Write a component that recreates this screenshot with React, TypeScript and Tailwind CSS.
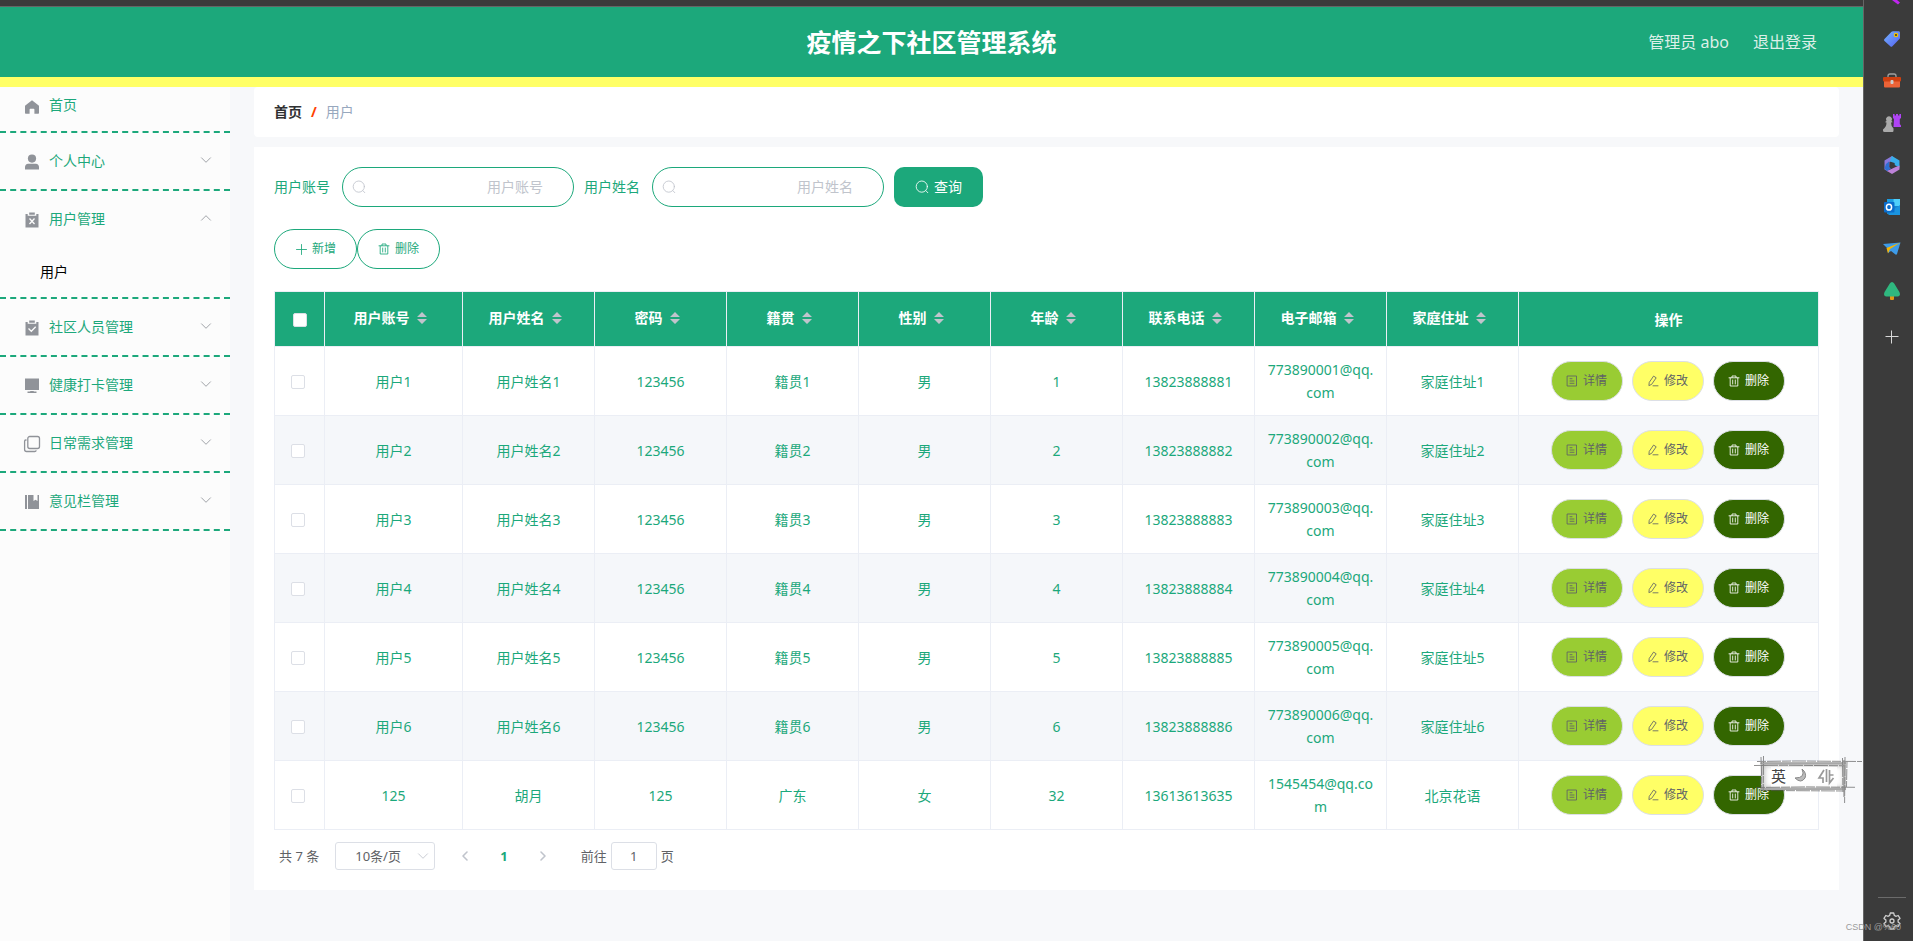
import React from "react";

type IconProps = { className?: string };

const line = {
  fill: "none",
  stroke: "currentColor",
  strokeWidth: 0.85,
  strokeLinecap: "round" as const,
  strokeLinejoin: "round" as const,
};

function SearchIcon({ className }: IconProps) {
  return (
    <svg viewBox="0 0 14 14" className={className} {...line} aria-hidden="true">
      <circle cx="6.8" cy="6.6" r="5.6" />
      <path d="M11 10.8l1.8 1.9" />
    </svg>
  );
}

function TrashIcon({ className }: IconProps) {
  return (
    <svg viewBox="0 0 12 12" className={className} {...line} aria-hidden="true">
      <path d="M1 2.8h10M4 2.6V1h4v1.6M2.2 3v8h7.6V3M4.7 5v4M7.3 5v4" />
    </svg>
  );
}

function PlusIcon({ className }: IconProps) {
  return (
    <svg viewBox="0 0 12 12" className={className} {...line} aria-hidden="true">
      <path d="M6.5 1.5v10M1.5 6.5h10" />
    </svg>
  );
}

function DocIcon({ className }: IconProps) {
  return (
    <svg viewBox="0 0 12 12" className={className} {...line} aria-hidden="true">
      <path d="M1.5 1h9v10h-9zM4 3.7h2M4 6h4M4 8.3h4" />
    </svg>
  );
}

function EditIcon({ className }: IconProps) {
  return (
    <svg viewBox="0 0 12 12" className={className} {...line} aria-hidden="true">
      <path d="M6.9 1.3l2.3 1.5-4.6 6.6-2.7 1.2.3-2.8zM6 10.8h5" />
    </svg>
  );
}

function Chevron({ className }: IconProps) {
  return (
    <svg viewBox="0 0 12 12" className={className} {...line} aria-hidden="true">
      <path d="M1.5 3.8L6 8.3l4.5-4.5" />
    </svg>
  );
}

function PageArrow({ className }: IconProps) {
  return (
    <svg viewBox="0 0 12 12" className={className} {...line} strokeWidth={1.6} aria-hidden="true">
      <path d="M8 2L4 6l4 4" />
    </svg>
  );
}

function HomeIcon() {
  return (
    <svg viewBox="0 0 18 18" className="size-[18px]" fill="currentColor" aria-hidden="true">
      <path d="M9 2.3L2.3 7.6c-.2.2-.3.4-.3.6V15c0 .4.3.7.7.7h3.9v-4.2c0-.4.3-.7.7-.7h3.400c.4 0 .7.3.7.7v4.2h3.900c.4 0 .7-.3.7-.7V8.200c0-.2-.1-.4-.3-.6z" />
    </svg>
  );
}

function UserIcon() {
  return (
    <svg viewBox="0 0 18 18" className="size-[18px]" fill="currentColor" aria-hidden="true">
      <circle cx="9" cy="5.6" r="4.1" />
      <path d="M2 16.500v-2.400c0-1.900 1.300-3.300 3.200-3.300h7.600c1.900 0 3.200 1.400 3.200 3.300v2.400z" />
    </svg>
  );
}

function Clipboard({ mark }: { mark: string }) {
  return (
    <svg viewBox="0 0 18 18" className="size-[18px]" aria-hidden="true">
      <path fill="currentColor" d="M2.500 3h2.200v1.800h8.600V3h2.200v13.500h-13zM6.200 1.500h5.600v2.200H6.200z" />
      <path d={mark} fill="none" stroke="#fcfcfc" strokeWidth="1.3" />
    </svg>
  );
}

function MonitorIcon() {
  return (
    <svg viewBox="0 0 18 18" className="size-[18px]" fill="currentColor" aria-hidden="true">
      <path d="M2 1.500h14v11.500H2zM7.500 14h3l.5.600h2.500V16h-9v-1.400H7z" />
    </svg>
  );
}

function CopyIcon() {
  return (
    <svg viewBox="0 0 18 18" className="size-[18px]" fill="none" stroke="currentColor" strokeWidth="1.3" aria-hidden="true">
      <rect x="4.8" y="1.5" width="11.7" height="12" rx="2" />
      <path d="M3.500 5H2.800C2 5 1.600 5.500 1.600 6.200v8.300c0 1.300.8 2 2 2h8c1 0 1.500-.3 1.500-1.300" />
    </svg>
  );
}

function BookIcon() {
  return (
    <svg viewBox="0 0 18 18" className="size-[18px]" fill="currentColor" aria-hidden="true">
      <path d="M2 2h2v14H2zM5 2h5.500v6l2-1.300 2 1.300V2H16v14H5z" />
    </svg>
  );
}

type MenuItem = { label: string; icon: React.ReactNode; child?: string };

const menu: MenuItem[] = [
  { label: "个人中心", icon: <UserIcon /> },
  { label: "用户管理", icon: <Clipboard mark="M6.500 7.500l5 5.500M11.500 7.500l-5 5.500" />, child: "用户" },
  { label: "社区人员管理", icon: <Clipboard mark="M5.500 9.500l2.800 2.800 4.400-4.600" /> },
  { label: "健康打卡管理", icon: <MonitorIcon /> },
  { label: "日常需求管理", icon: <CopyIcon /> },
  { label: "意见栏管理", icon: <BookIcon /> },
];

const columns = ["用户账号", "用户姓名", "密码", "籍贯", "性别", "年龄", "联系电话", "电子邮箱", "家庭住址"];

const rows: string[][] = [
  ...[1, 2, 3, 4, 5, 6].map((n) => [
    `用户${n}`,
    `用户姓名${n}`,
    "123456",
    `籍贯${n}`,
    "男",
    `${n}`,
    `1382388888${n}`,
    `77389000${n}@qq.com`,
    `家庭住址${n}`,
  ]),
  ["125", "胡月", "125", "广东", "女", "32", "13613613635", "1545454@qq.com", "北京花语"],
];

function Sidebar() {
  return (
    <nav className="w-[230px] shrink-0 bg-[#fcfcfc] text-sm leading-5 text-[#1ca87b]">
      <a href="#home" className="flex h-[46px] items-center border-b-2 border-dashed border-[#1ca87b] pb-2 pl-[23px]">
        <span className="mr-2 pt-[3px] text-[#909399]"><HomeIcon /></span>
        首页
      </a>
      {menu.map((m) => (
        <div key={m.label} className="border-b-2 border-dashed border-[#1ca87b]">
          <button type="button" aria-expanded={!!m.child} className="flex h-14 w-full items-center pr-[18px] pl-[23px] text-left">
            <span className="mr-2 pt-[2px] text-[#909399]">{m.icon}</span>
            <span className="flex-1">{m.label}</span>
            <Chevron className={m.child ? "mb-[2px] size-3 rotate-180 text-[#909399]" : "mb-[2px] size-3 text-[#909399]"} />
          </button>
          {m.child && (
            <a href="#users" className="flex h-[50px] items-center pl-10 text-black">{m.child}</a>
          )}
        </div>
      ))}
    </nav>
  );
}

function SearchField({ id, label }: { id: string; label: string }) {
  return (
    <div className="flex items-center gap-3">
      <label htmlFor={id}>{label}</label>
      <div className="relative">
        <SearchIcon className="absolute top-[13px] left-[10px] size-[14px] text-[#c0c4cc]" />
        <input
          id={id}
          type="text"
          placeholder={label}
          className="block h-10 w-[232px] rounded-full border border-[#1ca87b] bg-white pr-[30px] pb-[2px] pl-[30px] text-right outline-none placeholder:text-[#c0c4cc]"
        />
      </div>
    </div>
  );
}

function DataTable() {
  return (
    <table className="mt-[22px] w-full table-fixed border-collapse border border-[#ebeef5] text-center text-sm text-[#1ca87b]">
      <colgroup>
        <col className="w-[50px]" />
        <col className="w-[138px]" />
        <col span={8} />
        <col className="w-[300px]" />
      </colgroup>
      <thead>
        <tr className="h-[55px] bg-[#1ca87b] text-white">
          <th className="border border-[#ebeef5] p-0 pt-[2px]">
            <input type="checkbox" aria-label="全选" className="mx-auto block size-[14px] appearance-none rounded-[2px] border border-[#dcdfe6] bg-white" />
          </th>
          {columns.map((c) => (
            <th key={c} className="border border-[#ebeef5] p-0 font-bold">
              <button type="button" className="inline-flex items-center pb-[2px] leading-5 font-bold">
                {c}
                <svg viewBox="0 0 24 14" className="h-[14px] w-6" fill="#c0c4cc" aria-hidden="true">
                  <path d="M12 1l5 5H7zM12 13l5-5H7z" />
                </svg>
              </button>
            </th>
          ))}
          <th className="border border-[#ebeef5] p-0 pt-[2px] font-bold">操作</th>
        </tr>
      </thead>
      <tbody>
        {rows.map((r, i) => (
          <tr key={i} className="h-[69px] even:bg-[#f5f7fa]">
            <td className="border border-[#ebeef5] p-0 pt-[2px] pr-[3px]">
              <input type="checkbox" aria-label={`选择${r[0]}`} className="mx-auto block size-[14px] appearance-none rounded-[2px] border border-[#dcdfe6] bg-white" />
            </td>
            {r.map((v, j) => (
              <td key={j} className="border border-[#ebeef5] px-[10px] py-[11px] leading-[23px] break-all">{v}</td>
            ))}
            <td className="border border-[#ebeef5] p-0 pr-[2px]">
              <div className="flex justify-center gap-[9px] text-xs leading-4 text-[#606266]">
                <button type="button" className="flex h-10 w-[72px] items-center justify-center gap-[5px] rounded-full border border-[#dcdfe6] bg-[#99cc33]">
                  <DocIcon className="size-3" />详情
                </button>
                <button type="button" className="flex h-10 w-[72px] items-center justify-center gap-[5px] rounded-full border border-[#dcdfe6] bg-[#ffff66]">
                  <EditIcon className="size-3" />修改
                </button>
                <button type="button" className="flex h-10 w-[72px] items-center justify-center gap-[5px] rounded-full border border-[#dcdfe6] bg-[#336600] text-white">
                  <TrashIcon className="size-3" />删除
                </button>
              </div>
            </td>
          </tr>
        ))}
      </tbody>
    </table>
  );
}

function Pagination() {
  return (
    <div className="mt-3 flex items-center pl-[5px] text-[13px] leading-7 text-[#606266]">
      <span>共 7 条</span>
      <div className="relative ml-4">
        <select aria-label="每页条数" className="block h-7 w-[100px] appearance-none rounded-[3px] border border-[#dcdfe6] bg-white pl-[19px] leading-[26px] outline-none">
          <option>10条/页</option>
        </select>
        <Chevron className="pointer-events-none absolute top-2 right-[6px] size-3 text-[#c0c4cc]" />
      </div>
      <button type="button" aria-label="上一页" className="ml-6 text-[#c0c4cc]">
        <PageArrow className="size-3" />
      </button>
      <button type="button" aria-current="page" className="mx-[29px] font-bold text-[#1ca87b]">1</button>
      <button type="button" aria-label="下一页" className="text-[#c0c4cc]">
        <PageArrow className="size-3 rotate-180" />
      </button>
      <label htmlFor="goto" className="ml-8">前往</label>
      <input id="goto" type="text" defaultValue="1" className="mx-1 h-7 w-[46px] rounded-[3px] border border-[#dcdfe6] text-center outline-none" />
      <span>页</span>
    </div>
  );
}

function EdgeBar() {
  return (
    <aside className="flex w-[50px] shrink-0 flex-col items-center border-l border-[#666] bg-[#3b3b3b] pl-[7px]">
      <svg viewBox="0 0 18 6" className="h-[6px] w-[18px]" aria-hidden="true">
        <path d="M9 0h5l3 2.500-2 2z" fill="#c026ef" />
      </svg>
      <div className="mt-6 flex flex-col gap-6">
        <svg viewBox="0 0 18 18" className="size-[18px]" aria-hidden="true">
          <defs>
            <linearGradient id="tag" x1="0" y1="0" x2="1" y2="1"><stop stopColor="#74b5ff" /><stop offset="1" stopColor="#5560f0" /></linearGradient>
          </defs>
          <path d="M10 1.200h5.500c1 0 1.500.6 1.500 1.500v5c0 .6-.2 1-.6 1.400l-7 7.200c-.7.700-1.400.7-2.100 0L1.500 11c-.6-.6-.6-1.300 0-2l7-7.200c.4-.4.9-.6 1.500-.6z" fill="url(#tag)" />
          <circle cx="13" cy="5" r="1.7" fill="#3b3b3b" stroke="#f5c400" strokeWidth="1.2" />
        </svg>
        <svg viewBox="0 0 18 18" className="size-[18px]" aria-hidden="true">
          <path d="M5 5.500V4q0-2 2-2h4q2 0 2 2v1.500" fill="none" stroke="#a0a0a0" strokeWidth="1.3" />
          <rect x="1" y="8" width="16" height="7.5" rx="1" fill="#ec6337" />
          <rect x="0" y="5" width="18" height="4.5" rx="1" fill="#cf4011" />
          <rect x="7.5" y="8" width="3" height="4" rx="1" fill="#ccc" />
        </svg>
        <svg viewBox="0 0 18 18" className="size-[18px]" aria-hidden="true">
          <path d="M10 0h1.600v1.500H13V0h2v1.500h1.400V0H18v4l-1.200 1v5l1.200 1.500V13h-7.500l.5-8-1-1z" fill="#b044f5" />
          <path d="M3.500 7a3 3 0 1 1 5 0l.8.600v1H8q0 3.500 2.500 5.900v2q0 1.500-1 1.500h-8Q0 18 0 16.500v-1q3.500-2.500 3.500-6.900H2.500v-1z" fill="#aaa" />
        </svg>
        <svg viewBox="0 0 18 18" className="size-[18px]" aria-hidden="true">
          <path d="M9 0L1.500 4.500v9L5 15.500 6.500 13V6L12 3z" fill="#8a78dc" />
          <path d="M9 0l7.500 4.500v7L11.500 9V7L7 5.500l1-4z" fill="#3aaeea" />
          <path d="M16.500 9.500v4L9 18l-5-3 7.500-3.500z" fill="#bd82d8" />
          <path d="M1.500 12.500L4 15l4-2.500L6 11V5.500L3 8z" fill="#2f6fd0" />
          <path d="M7 6.500l4.500 1V11l-3 1.500L6.500 11z" fill="#3b3b3b" />
        </svg>
        <svg viewBox="0 0 18 18" className="size-[18px]" aria-hidden="true">
          <path d="M4 1h13v15H4z" fill="#1687d0" />
          <path d="M4 1h6.500v6H4z" fill="#1b9de2" /><path d="M10.500 1H17v7h-6.500z" fill="#4fd0fb" />
          <path d="M10 12l7-5v10H5z" fill="#1a94e0" />
          <rect x="1" y="4" width="10.5" height="10.5" rx="1" fill="#0a6ccc" />
          <ellipse cx="6" cy="9.2" rx="2.6" ry="2.9" fill="none" stroke="#fff" strokeWidth="1.5" />
        </svg>
        <svg viewBox="0 0 18 18" className="size-[18px]" aria-hidden="true">
          <path d="M0 4l17.500-1.500L14 14q-.5 1-1.500.5L8 11l-3 2-1-5z" fill="#3e9be8" />
          <path d="M3.500 8L17.500 2.500 7 9l-2 4.500z" fill="#f7b500" />
        </svg>
        <svg viewBox="0 0 18 18" className="size-[18px]" aria-hidden="true">
          <rect x="7" y="13" width="4" height="5" rx="1" fill="#e39a13" />
          <path d="M9 0q1.300 0 2.200 1.500l5.200 8.500q2 4.500-3 4.500H4.600q-5 0-3-4.500l5.200-8.500Q7.700 0 9 0z" fill="#2fb87f" />
        </svg>
      </div>
      <svg viewBox="0 0 14 14" className="mt-[30px] size-[14px]" stroke="#d8d8d8" aria-hidden="true">
        <path d="M6.500 .5v13M.5 6.500h13" />
      </svg>
      <div className="mt-auto h-px w-7 bg-[#6b6b6b]" />
      <svg viewBox="0 0 18 18" className="mt-[14px] mb-[11px] size-[18px]" fill="none" stroke="#d0d0d0" strokeWidth="1.3" strokeLinejoin="round" aria-hidden="true">
        <path d="M7.300 1h3.400l.6 2.400 1.500.9 2.400-.8L17 6.400l-1.900 1.700v1.800l1.900 1.700-1.800 2.900-2.400-.8-1.500.9-.6 2.400H7.300l-.6-2.400-1.500-.9-2.400.8L1 11.600l1.900-1.700V8.100L1 6.400l1.800-2.900 2.400.8 1.500-.9z" />
        <circle cx="9" cy="9" r="2" />
      </svg>
    </aside>
  );
}

function InputMethodBar() {
  return (
    <div className="absolute right-[47px] bottom-[134px] h-[52px] w-[112px] text-[#444]">
      <svg viewBox="0 0 112 52" className="absolute inset-0 size-full" aria-hidden="true">
        <defs>
          <filter id="soft" x="-10%" y="-10%" width="120%" height="120%"><feGaussianBlur stdDeviation="2.5" /></filter>
        </defs>
        <rect x="7" y="7" width="85" height="28" fill="#c4c4c4" />
        <rect x="11" y="11" width="78" height="21" fill="#fff" filter="url(#soft)" />
        <rect x="17" y="12" width="66" height="20" fill="#fff" opacity=".8" />
        <g stroke="#555" fill="none" opacity=".65">
          <path d="M3 6.500l40-.5 65 .5M0 10.500l30-.3 60 .6M2 32.500l50-.6 50 .4M7 35.500l85 .5" strokeDasharray="9 1 14 1" />
          <path d="M7 2l.4 16-.4 18M9.500 1l-.3 34M88.500 3l.5 34M91 2l-.4 46M93 6l-.5 26" strokeDasharray="7 1 11 1" />
        </g>
        <g stroke="#909090" strokeWidth="2" opacity=".6"><path d="M6 8.500h86M8 34h84M90 5v37" /></g>
        <path d="M48 14q4 9-7 9 6 6 10 0 2-5-3-9z" fill="#bbb" stroke="#888" />
        <path d="M70 15l-5 8h4v5M72.500 14v13M75.500 15v13l4-5M75.500 20h4" fill="none" stroke="#999" strokeWidth="1.7" />
      </svg>
      <span className="absolute top-[10px] left-[17px] text-[15px] leading-[22px]">英</span>
    </div>
  );
}

export default function App() {
  return (
    <div className="relative flex min-h-screen bg-[#f7f8fa] font-['Noto_Sans','Noto_Sans_CJK_SC',sans-serif]">
      <div className="flex min-w-0 flex-1 flex-col">
        <div className="h-[7px] border-b border-[#666] bg-[#3b3b3b]" />
        <header className="relative flex h-20 items-center justify-center border-b-[10px] border-[#ffff66] bg-[#1ca87b]">
          <h1 className="text-[25px] leading-9 font-bold text-white">疫情之下社区管理系统</h1>
          <div className="absolute right-[46px] flex gap-6 text-base leading-6 text-[#dcefe8]">
            <span>管理员 abo</span>
            <a href="#logout">退出登录</a>
          </div>
        </header>
        <div className="flex flex-1">
          <Sidebar />
          <main className="min-w-0 flex-1 px-6 text-sm text-[#1ca87b]">
            <div className="flex h-[50px] items-center rounded-[4px] bg-white px-5 leading-5">
              <a href="#home" className="font-bold text-[#303133]">首页</a>
              <span className="mx-[9px] font-bold text-[#ff4000]">/</span>
              <span className="text-[#97a8be]">用户</span>
            </div>
            <section className="mt-[10px] bg-white px-5 pt-5 pb-5 leading-5">
              <form className="flex items-center gap-[10px]">
                <SearchField id="account" label="用户账号" />
                <SearchField id="name" label="用户姓名" />
                <button type="button" className="flex h-10 w-[89px] items-center justify-center gap-[5px] rounded-[10px] bg-[#1ca87b] text-white">
                  <SearchIcon className="size-[14px]" />查询
                </button>
              </form>
              <div className="mt-[22px] flex text-xs leading-4">
                <button type="button" className="flex h-10 w-[83px] items-center justify-center gap-[5px] rounded-full border border-[#1ca87b]">
                  <PlusIcon className="size-3" />新增
                </button>
                <button type="button" className="flex h-10 w-[83px] items-center justify-center gap-[5px] rounded-full border border-[#1ca87b]">
                  <TrashIcon className="size-3" />删除
                </button>
              </div>
              <DataTable />
              <Pagination />
            </section>
          </main>
        </div>
      </div>
      <EdgeBar />
      <InputMethodBar />
      <span className="absolute right-3 bottom-[6px] font-['Liberation_Sans','Noto_Sans_CJK_SC',sans-serif] text-[9px] leading-4 text-[#9b9b9b]">CSDN @%60</span>
    </div>
  );
}
